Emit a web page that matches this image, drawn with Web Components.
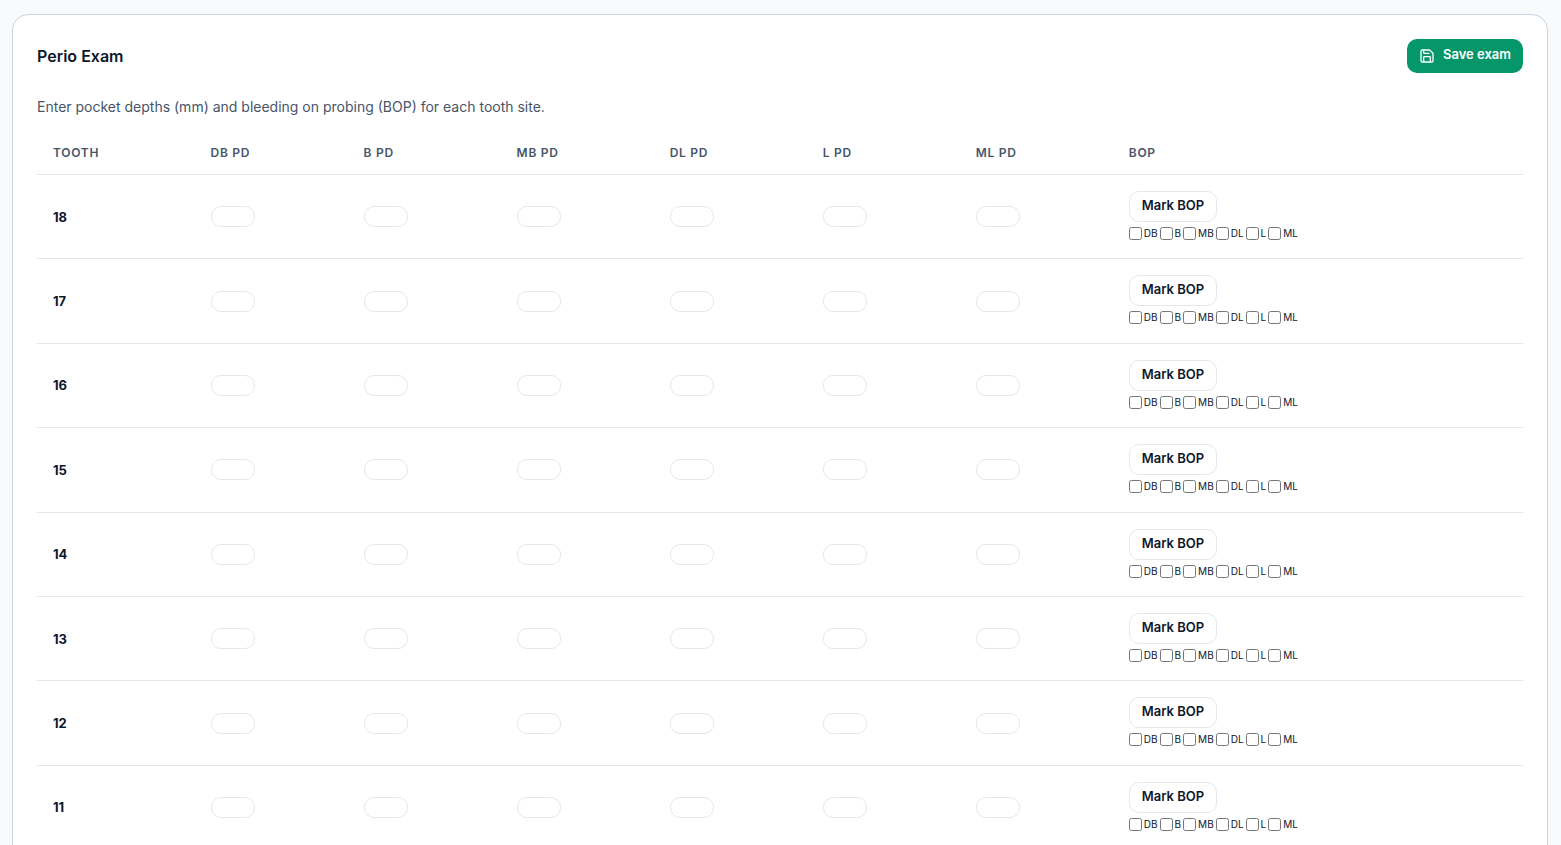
<!DOCTYPE html>
<html lang="en">
<head>
<meta charset="utf-8">
<meta name="viewport" content="width=device-width, initial-scale=1">
<title>Perio Exam</title>
<style>
body { margin: 0; padding: 14px 13px 14px 12px; background: #f8fafc; color: #0f172a; font-family: Inter, "Liberation Sans", sans-serif; font-size: 14px; line-height: 20px; }
</style>
</head>
<body>
<perio-exam></perio-exam>
<script>
class ExamCard extends HTMLElement {
  constructor() {
    super();
    this.attachShadow({ mode: 'open' }).innerHTML = `
      <style>
        :host { display: block; box-sizing: border-box; max-width: 1536px; margin: 0 auto; padding: 24px; background: #fff; border: 1px solid #cbd5e1; border-radius: 16px; }
        header { display: flex; align-items: center; justify-content: space-between; }
      </style>
      <header><slot name="title"></slot><slot name="action"></slot></header>
      <slot></slot>`;
  }
}
customElements.define('exam-card', ExamCard);

class SaveButton extends HTMLElement {
  constructor() {
    super();
    this.attachShadow({ mode: 'open' }).innerHTML = `
      <style>
        :host { display: block; }
        button { display: flex; align-items: flex-end; gap: 8px; padding: 6px 12px 10px; border: 0; border-radius: 10px; background: #059669; color: #fff; font: 600 13px/18px Inter, "Liberation Sans", sans-serif; cursor: pointer; }
        svg { display: block; width: 16px; height: 16px; margin-bottom: -1px; }
      </style>
      <button type="button">
        <svg viewBox="0 0 24 24" fill="none" stroke="currentColor" stroke-width="2" stroke-linecap="round" stroke-linejoin="round" aria-hidden="true">
          <path d="M15.2 3a2 2 0 0 1 1.4.6l3.8 3.8a2 2 0 0 1 .6 1.4V19a2 2 0 0 1-2 2H5a2 2 0 0 1-2-2V5a2 2 0 0 1 2-2z"/>
          <path d="M17 21v-7a1 1 0 0 0-1-1H8a1 1 0 0 0-1 1v7"/><path d="M7 3v4a1 1 0 0 0 1 1h7"/>
        </svg>
        <slot></slot>
      </button>`;
  }
}
customElements.define('save-button', SaveButton);

class DepthInput extends HTMLElement {
  connectedCallback() {
    this.attachShadow({ mode: 'open' }).innerHTML = `
      <style>
        :host { display: block; }
        input { display: block; box-sizing: border-box; width: 44px; height: 21px; margin: 0; padding: 0 8px; border: 1px solid #e2e8f0; border-radius: 10px; background: #fff; color: inherit; font: inherit; font-size: 13px; outline-offset: 1px; }
      </style>
      <input type="text" inputmode="numeric" aria-label="${this.getAttribute('label')}">`;
  }
}
customElements.define('depth-input', DepthInput);

class BopField extends HTMLElement {
  connectedCallback() {
    const sites = ['DB', 'B', 'MB', 'DL', 'L', 'ML'];
    this.attachShadow({ mode: 'open' }).innerHTML = `
      <style>
        :host { display: flex; flex-direction: column; align-items: flex-start; gap: 5px; }
        button { display: block; padding: 4px 12px 7px; border: 1px solid #e2e8f0; border-radius: 10px; background: #fff; color: #0f172a; font: 600 13px/18px Inter, "Liberation Sans", sans-serif; cursor: pointer; }
        .sites { display: flex; gap: 2px; font-size: 11px; min-height: 1.4em; }
        label { display: flex; align-items: flex-start; gap: 2px; }
        input { width: 13px; height: 13px; margin: 0; }
        span { font-size: 10px; line-height: 13px; }
      </style>
      <button type="button">Mark BOP</button>
      <div class="sites" role="group" aria-label="Bleeding sites">
        ${sites.map(s => `<label><input type="checkbox"><span>${s}</span></label>`).join('')}
      </div>`;
    const root = this.shadowRoot;
    root.querySelector('button').addEventListener('click', () => {
      const boxes = [...root.querySelectorAll('input')];
      const all = boxes.every(b => b.checked);
      boxes.forEach(b => { b.checked = !all; });
    });
  }
}
customElements.define('bop-field', BopField);

class PerioTable extends HTMLElement {
  connectedCallback() {
    const sites = ['DB', 'B', 'MB', 'DL', 'L', 'ML'];
    const teeth = [18, 17, 16, 15, 14, 13, 12, 11];
    this.attachShadow({ mode: 'open' }).innerHTML = `
      <style>
        :host { display: block; }
        table { width: 100%; table-layout: fixed; border-collapse: separate; border-spacing: 0; }
        .tooth { width: 10.6%; } .site { width: 10.3%; }
        th, td { text-align: left; padding: 16px; border-bottom: 1px solid #e2e8f0; vertical-align: middle; }
        thead th { padding: 12px 16px; color: #475569; font-size: 12px; line-height: 18px; font-weight: 600; letter-spacing: 0.06em; text-transform: uppercase; }
        tbody th { color: #0f172a; font-size: 13px; font-weight: 700; line-height: 20px; }
      </style>
      <table>
        <colgroup><col class="tooth">${sites.map(() => '<col class="site">').join('')}<col></colgroup>
        <thead><tr><th scope="col">Tooth</th>${sites.map(s => `<th scope="col">${s} PD</th>`).join('')}<th scope="col">BOP</th></tr></thead>
        <tbody>${teeth.map(t => `<tr><th scope="row">${t}</th>${sites.map(s => `<td><depth-input label="Tooth ${t} ${s} pocket depth"></depth-input></td>`).join('')}<td><bop-field></bop-field></td></tr>`).join('')}</tbody>
      </table>`;
  }
}
customElements.define('perio-table', PerioTable);

class PerioExam extends HTMLElement {
  constructor() {
    super();
    this.attachShadow({ mode: 'open' }).innerHTML = `
      <style>
        :host { display: block; }
        h2 { margin: 0; font-size: 16px; line-height: 24px; font-weight: 600; }
        p { margin: 24px 0 15px; color: #475569; font-size: 14px; line-height: 20px; }
      </style>
      <exam-card>
        <h2 slot="title">Perio Exam</h2>
        <save-button slot="action">Save exam</save-button>
        <p>Enter pocket depths (mm) and bleeding on probing (BOP) for each tooth site.</p>
        <perio-table></perio-table>
      </exam-card>`;
  }
}
customElements.define('perio-exam', PerioExam);
</script>
</body>
</html>
